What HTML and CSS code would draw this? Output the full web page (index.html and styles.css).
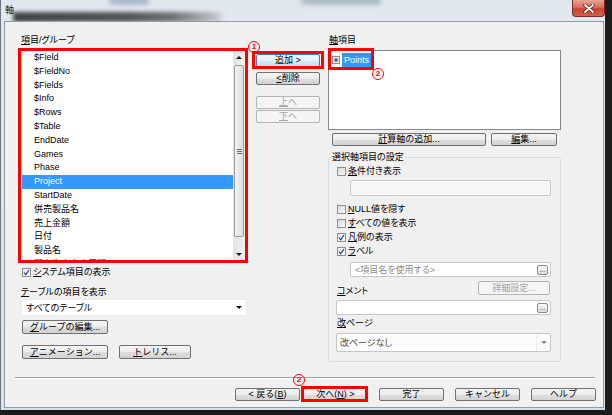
FILE: index.html
```html
<!DOCTYPE html>
<html lang="ja">
<head>
<meta charset="utf-8">
<title>軸</title>
<link rel="stylesheet" href="styles.css">
</head>
<body>
<div class="window">
  <div class="titlebar">
    <div class="glass-blur"></div>
    <div class="glass-spot s1"></div>
    <div class="glass-spot s2"></div>
    <span class="title">軸</span>
    <div class="close">
      <svg width="12" height="9" viewBox="0 0 12 9"><path d="M2 1 L10 8 M10 1 L2 8" stroke="#5a1a12" stroke-width="3.4" stroke-linecap="round"/><path d="M2 1 L10 8 M10 1 L2 8" stroke="#ffffff" stroke-width="1.8" stroke-linecap="round"/></svg>
    </div>
  </div>
  <div class="client">
    <div class="main">
      <div class="col col-left">
        <div class="label"><u>項</u>目/グループ</div>
        <div class="listbox">
          <ul class="items">
            <li>$Field</li>
            <li>$FieldNo</li>
            <li>$Fields</li>
            <li>$Info</li>
            <li>$Rows</li>
            <li>$Table</li>
            <li>EndDate</li>
            <li>Games</li>
            <li>Phase</li>
            <li class="sel">Project</li>
            <li>StartDate</li>
            <li>併売製品名</li>
            <li>売上金額</li>
            <li>日付</li>
            <li>製品名</li>
            <li>販売先小売店種類</li>
          </ul>
          <div class="vscroll">
            <div class="sb-btn"><span class="tri up"></span></div>
            <div class="sb-thumb"><span class="grip"></span></div>
            <div class="sb-btn"><span class="tri down"></span></div>
          </div>
        </div>
        <div class="check sys"><span class="cb on"><svg width="7" height="7" viewBox="0 0 7 7"><path d="M1 3.6 L2.8 5.6 L6 1" fill="none" stroke="#2b4a9a" stroke-width="1.3"/></svg></span><span><u>シ</u>ステム項目の表示</span></div>
        <div class="label lbl-table"><u>テ</u>ーブルの項目を表示</div>
        <div class="combo">すべてのテーブル<span class="arrow"></span></div>
        <button class="btn btn-group"><u>グ</u>ループの編集...</button>
        <div class="btnrow">
          <button class="btn btn-anim"><u>ア</u>ニメーション...</button>
          <button class="btn btn-trellis"><u>ト</u>レリス...</button>
        </div>
      </div>

      <div class="col col-mid">
        <div class="annot add-wrap">
          <button class="btn default">追加 &gt;</button>
          <span class="redbox rb-add"></span>
          <span class="marker mk1">1</span>
        </div>
        <button class="btn btn-del"><u>&lt;</u> 削除</button>
        <button class="btn dis btn-up"><u>上</u>へ</button>
        <button class="btn dis btn-down"><u>下</u>へ</button>
      </div>

      <div class="col col-right">
        <div class="label lbl-axis"><u>軸</u>項目</div>
        <div class="tree">
          <div class="node">
            <svg class="expander" width="8" height="8" viewBox="0 0 8 8"><rect x="0.5" y="0.5" width="7" height="7" fill="#e6e6e6" stroke="#8d8d8d"/><path d="M2 4 H6 M4 2 V6" stroke="#333" stroke-width="1"/></svg>
            <span class="node-text">Points</span>
          </div>
          <span class="redbox rb-points"></span>
          <span class="marker mk2">2</span>
        </div>
        <div class="btnrow2">
          <button class="btn btn-calc"><u>計</u>算軸の追加...</button>
          <button class="btn btn-edit"><u>編</u>集...</button>
        </div>
        <fieldset class="group">
          <legend>選択軸項目の設定</legend>
          <div class="check first"><span class="cb"></span><span><u>条</u>件付き表示</span></div>
          <div class="field indent disabled"></div>
          <div class="check rows"><span class="cb"></span><span><u>N</u>ULL値を隠す</span></div>
          <div class="check rows"><span class="cb"></span><span><u>す</u>べての値を表示</span></div>
          <div class="check rows"><span class="cb on"><svg width="7" height="7" viewBox="0 0 7 7"><path d="M1 3.6 L2.8 5.6 L6 1" fill="none" stroke="#2b4a9a" stroke-width="1.3"/></svg></span><span><u>凡</u>例の表示</span></div>
          <div class="check rows"><span class="cb on"><svg width="7" height="7" viewBox="0 0 7 7"><path d="M1 3.6 L2.8 5.6 L6 1" fill="none" stroke="#2b4a9a" stroke-width="1.3"/></svg></span><span><u>ラ</u>ベル</span></div>
          <div class="field indent label-field"><span class="ph">&lt;項目名を使用する&gt;</span><span class="dots">...</span></div>
          <div class="comment-row">
            <span class="comment-label"><u>コ</u>メント</span>
            <button class="btn dis btn-detail">詳細設定...</button>
          </div>
          <div class="field comment-field"><span class="dots">...</span></div>
          <div class="label lbl-page"><u>改</u>ページ</div>
          <div class="combo page-combo"><span class="page-text">改ページなし</span><span class="combo-btn"><span class="arrow gray"></span></span></div>
        </fieldset>
      </div>
    </div>
    <div class="separator"></div>
    <div class="footer">
      <button class="btn fbtn">&lt; 戻る(<u>B</u>)</button>
      <div class="annot next-wrap">
        <button class="btn fbtn">次へ(<u>N</u>) &gt;</button>
        <span class="redbox rb-next"></span>
        <span class="marker mk3">2</span>
      </div>
      <button class="btn fbtn gap">完了</button>
      <button class="btn fbtn gap">キャンセル</button>
      <button class="btn fbtn gap">ヘルプ</button>
    </div>
  </div>
</div>
</body>
</html>
```

FILE: styles.css
```css
* { box-sizing: border-box; }
html, body { margin: 0; padding: 0; }
body {
  width: 612px;
  height: 415px;
  overflow: hidden;
  background: #1c1c1c;
  font-family: "Liberation Sans", "Noto Sans CJK JP", sans-serif;
  font-size: 9px;
  color: #000;
  font-feature-settings: "palt";
}
u { text-decoration: underline; text-underline-offset: 1px; }

.window {
  width: 605px;
  height: 410px;
  background: linear-gradient(180deg, #dfe6ee 0, #e4e9f0 22px, #d8e0e9 100%);
  border-left: 1px solid #6b7682;
}

/* title bar */
.titlebar {
  position: relative;
  height: 21px;
  display: flex;
  align-items: flex-start;
  overflow: hidden;
}
.glass-blur {
  position: absolute;
  left: 12px;
  top: 12px;
  width: 212px;
  height: 10px;
  background: linear-gradient(90deg, rgba(35,35,35,0.85), rgba(45,45,45,0.8) 55%, rgba(70,70,70,0.75) 75%, rgba(90,90,90,0.3) 95%, rgba(90,90,90,0));
  filter: blur(2px);
}
.glass-spot {
  position: absolute;
  top: -3px;
  height: 8px;
  border-radius: 4px;
  filter: blur(2px);
}
.s1 { left: 108px; width: 40px; background: rgba(110,130,165,0.45); }
.s2 { left: 300px; width: 80px; background: rgba(110,140,150,0.45); }
.title {
  position: relative;
  margin: 5px 0 0 4px;
  font-size: 9px;
  line-height: 11px;
  color: #1b1b1b;
}
.close {
  position: relative;
  margin-left: auto;
  width: 33px;
  height: 17px;
  border: 1px solid #7d2a1f;
  border-top: none;
  border-radius: 0 0 4px 4px;
  background: linear-gradient(180deg, #e6a394 0, #d6715f 45%, #c4432f 55%, #d3604a 100%);
  display: flex;
  align-items: center;
  justify-content: center;
}

/* client */
.client {
  margin-left: 3px;
  width: 600px;
  height: 387px;
  border: 1px solid #8f9ba7;
  background: #f0f0f0;
}
.main {
  display: flex;
  height: 355px;
  padding: 12px 0 0 13px;
}
.col { display: flex; flex-direction: column; }
.col-left { width: 230px; }
.col-mid { width: 70px; margin-left: 4px; padding-left: 4px; }
.col-right { width: 233px; margin-left: 6px; }

.label { height: 12px; line-height: 12px; white-space: nowrap; }
.col-left > .label { padding-left: 3px; }
.lbl-axis { padding-left: 1px; }

/* list */
.listbox {
  margin-top: 2px;
  height: 215px;
  border: 3px solid #ff0000;
  background: #fff;
  display: flex;
}
.items {
  flex: 1;
  margin: 0;
  padding: 0;
  list-style: none;
  overflow: hidden;
}
.items li {
  height: 13.8px;
  line-height: 13.8px;
  padding-left: 12px;
  margin-left: 1px;
  white-space: nowrap;
}
.items li.sel { background: #3399ff; color: #fff; }
.vscroll {
  width: 12px;
  display: flex;
  flex-direction: column;
  background: linear-gradient(90deg, #e3e3e3, #f0f0f0);
}
.sb-btn {
  height: 12px;
  display: flex;
  align-items: center;
  justify-content: center;
}
.tri { width: 0; height: 0; border-left: 3px solid transparent; border-right: 3px solid transparent; }
.tri.up { border-bottom: 3px solid #222; }
.tri.down { border-top: 3px solid #222; }
.sb-thumb {
  margin: 2px 1px 0 1px;
  height: 172px;
  border: 1px solid #9b9b9b;
  border-radius: 2px;
  background: linear-gradient(90deg, #f4f4f4, #dcdcdc);
  display: flex;
  align-items: center;
  justify-content: center;
}
.sb-thumb + .sb-btn { margin-top: auto; }
.grip {
  width: 5px;
  height: 5px;
  border-top: 1px solid #6e6e6e;
  border-bottom: 1px solid #6e6e6e;
  position: relative;
}
.grip::after {
  content: "";
  position: absolute;
  left: 0;
  right: 0;
  top: 1px;
  border-top: 1px solid #6e6e6e;
}

/* checkbox */
.check {
  display: flex;
  align-items: center;
  height: 13px;
  line-height: 13px;
  white-space: nowrap;
}
.cb {
  width: 9px;
  height: 9px;
  margin-right: 2px;
  border: 1px solid #8e8f8f;
  background: linear-gradient(135deg, #d8d8d8, #fbfbfb);
  display: flex;
  align-items: center;
  justify-content: center;
  flex: none;
}
.cb.on { background: linear-gradient(135deg, #e6e6e6, #ffffff); }
.check.sys { margin-top: 3px; padding-left: 4px; }
.lbl-table { margin-top: 7px; }

/* combo */
.combo {
  margin-top: 1px;
  margin-left: 3px;
  width: 226px;
  height: 17px;
  background: #fff;
  border: 1px solid #ececec;
  display: flex;
  align-items: center;
  padding-left: 4px;
  white-space: nowrap;
}
.arrow {
  margin-left: auto;
  margin-right: 4px;
  width: 0;
  height: 0;
  border-left: 3px solid transparent;
  border-right: 3px solid transparent;
  border-top: 3px solid #111;
}
.arrow.gray { margin: 0; border-top-color: #8a8a8a; }

/* buttons */
.btn {
  display: flex;
  align-items: center;
  justify-content: center;
  height: 13px;
  padding: 0;
  margin: 0;
  border: 1px solid #707070;
  border-radius: 2px;
  background: linear-gradient(180deg, #f4f4f4 0, #ececec 50%, #dedede 51%, #d2d2d2 100%);
  font-family: inherit;
  font-size: 9px;
  line-height: 11px;
  color: #000;
  white-space: nowrap;
}
.btn.default { border-color: #3c7fb1; background: linear-gradient(180deg, #f2f8fc 0, #e6f1f9 50%, #d6e8f5 51%, #c9e0f1 100%); }
.btn.dis { border-color: #b0b5b9; background: #f4f4f4; color: #a3a3a3; }

.btn-group { margin-top: 4px; margin-left: 4px; width: 86px; height: 14px; }
.btnrow { display: flex; margin-top: 11px; margin-left: 4px; }
.btn-anim { width: 86px; height: 14px; }
.btn-trellis { width: 72px; height: 14px; margin-left: 11px; }

/* middle column */
.annot { position: relative; }
.add-wrap { margin-top: 20px; }
.col-mid .btn { width: 64px; }
.btn-del { margin-top: 5px; }
.btn-up { margin-top: 11px; }
.btn-down { margin-top: 1px; }
.redbox {
  position: absolute;
  border: 3px solid #ff0000;
  pointer-events: none;
}
.rb-add { left: -4px; top: -3px; right: -2px; bottom: -2px; }
.marker {
  position: absolute;
  width: 12px;
  height: 12px;
  border: 1.5px solid #ff0000;
  border-radius: 50%;
  color: #ff0000;
  font-size: 8px;
  font-weight: bold;
  line-height: 9px;
  text-align: center;
}
.mk1 { left: -8px; top: -13px; }

/* right column */
.tree {
  position: relative;
  margin-top: 4px;
  height: 80px;
  border: 1px solid #828790;
  background: #fff;
  padding: 2px 0 0 3px;
}
.node { display: flex; align-items: center; height: 14px; }
.expander { flex: none; }
.node-text {
  margin-left: 2px;
  height: 14px;
  line-height: 14px;
  padding: 0 2px;
  width: 29px;
  background: #3399ff;
  color: #fff;
}
.rb-points { left: -1px; top: -3px; width: 46px; height: 22px; }
.mk2 { left: 43px; top: 17px; }

.btnrow2 { display: flex; margin-top: 3px; }
.btn-calc { margin-left: 4px; width: 154px; }
.btn-edit { margin-left: 5px; width: 66px; }

.group {
  margin: 5px 0 0 0;
  padding: 0 9px 9px 8px;
  border: 1px solid #d3dbe2;
  border-radius: 3px;
  min-width: 0;
}
.group legend {
  margin-left: -6px;
  padding: 0 1px;
  height: 12px;
  line-height: 12px;
}
.check.first { margin-top: 2px; }
.check.rows { height: 14px; }
.check.rows:first-of-type { margin-top: 0; }
.field {
  height: 16px;
  border: 1px solid #c3c6cb;
  border-radius: 2px;
  background: #fff;
  display: flex;
  align-items: center;
  padding-left: 4px;
  white-space: nowrap;
}
.field.indent { margin-left: 13px; width: 201px; }
.field.disabled { margin-top: 2px; margin-bottom: 6px; background: #f6f6f6; }
.label-field { margin-top: 4px; height: 15px; }
.ph { color: #8c8c8c; }
.dots {
  margin-left: auto;
  margin-right: 2px;
  width: 11px;
  height: 10px;
  border: 1px solid #8a8a8a;
  border-radius: 2px;
  background: linear-gradient(180deg, #fafafa, #dcdcdc);
  font-size: 7px;
  line-height: 7px;
  text-align: center;
  color: #333;
}
.comment-row {
  display: flex;
  align-items: flex-end;
  margin-top: 4px;
  height: 16px;
}
.comment-label { line-height: 12px; }
.btn-detail { margin-left: auto; align-self: flex-start; width: 72px; height: 14px; margin-right: 1px; }
.comment-field { margin-top: 3px; height: 15px; margin-left: -1px; width: 215px; }
.lbl-page { margin-top: 2px; }
.page-combo {
  margin-top: 4px;
  margin-left: -1px;
  width: 215px;
  height: 19px;
  border: 1px solid #c3c6cb;
  border-radius: 2px;
  background: #fbfbfb;
  padding-left: 3px;
}
.page-text { color: #4a4a4a; }
.combo-btn {
  margin-left: auto;
  width: 14px;
  height: 17px;
  border-left: 1px solid #ececec;
  display: flex;
  align-items: center;
  justify-content: center;
}

/* footer */
.separator {
  margin-left: 10px;
  width: 580px;
  height: 2px;
  border-top: 1px solid #a0a0a0;
  border-bottom: 1px solid #ffffff;
}
.footer {
  display: flex;
  margin-top: 9px;
  padding-left: 230px;
}
.fbtn { width: 65px; }
.next-wrap { margin-left: 3px; }
.fbtn.gap { margin-left: 11px; }
.rb-next { left: -2px; top: -2px; right: 0; bottom: -1px; }
.mk3 { left: -10px; top: -14px; }
```
